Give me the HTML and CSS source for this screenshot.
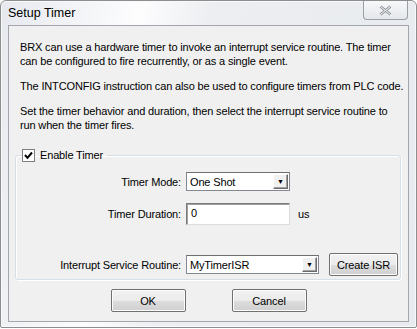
FILE: index.html
```html
<!DOCTYPE html>
<html>
<head>
  <meta charset="utf-8" />
  <title>Setup Timer</title>
  <link rel="stylesheet" href="styles.css">
</head>
<body>
  <section class="window">
    <header class="titlebar">
      <span class="title">Setup Timer</span>
      <span class="close">
        <svg width="13" height="11" viewBox="0 0 13 11">
          <path d="M1.5 1.5 L11.5 9.5 M11.5 1.5 L1.5 9.5" stroke="#8a8f96" stroke-width="2.6" fill="none"/>
          <path d="M1.5 1.5 L11.5 9.5 M11.5 1.5 L1.5 9.5" stroke="#fff" stroke-width="1" fill="none"/>
        </svg>
      </span>
    </header>
    <section class="client">
      <p>BRX can use a hardware timer to invoke an interrupt service routine. The timer can be configured to fire recurrently, or as a single event.</p>
      <p>The INTCONFIG instruction can also be used to configure timers from PLC code.</p>
      <p class="narrow">Set the timer behavior and duration, then select the interrupt service routine to run when the timer fires.</p>
      <fieldset class="group">
        <legend>
          <span class="check">
            <svg width="9" height="9" viewBox="0 0 9 9"><path d="M1 4 L3.5 6.8 L8 1.5" stroke="#000" stroke-width="2" fill="none"/></svg>
          </span>
          Enable Timer
        </legend>
        <div class="row mode">
          <label>Timer Mode:</label>
          <span class="combo short"><span class="value">One Shot</span><span class="drop">&#9660;</span></span>
        </div>
        <div class="row duration">
          <label>Timer Duration:</label>
          <span class="edit">0</span>
          <span class="unit">us</span>
        </div>
        <div class="row isr">
          <label>Interrupt Service Routine:</label>
          <span class="combo long"><span class="value">MyTimerISR</span><span class="drop">&#9660;</span></span>
          <button type="button" class="btn create">Create ISR</button>
        </div>
      </fieldset>
      <div class="actions">
        <button type="button" class="btn">OK</button>
        <button type="button" class="btn">Cancel</button>
      </div>
    </section>
  </section>
</body>
</html>
```

FILE: styles.css
```css
* { box-sizing: border-box; margin: 0; padding: 0; }
body {
  width: 417px;
  height: 329px;
  background: #fff;
  font: 11px "Liberation Sans", Arial, sans-serif;
  letter-spacing: -0.15px;
  color: #000;
}
.window {
  width: 417px;
  height: 328px;
  display: flex;
  flex-direction: column;
  border: 1px solid #8e8e8e;
  border-radius: 6px 6px 2px 2px;
  padding: 0 7px 5px;
  background: linear-gradient(100deg, #e6e9ee 0, #fdfdfe 30%, #eceef1 45%, #e8ebef 100%);
  box-shadow: inset 0 0 0 1px #f8f9fb;
}
.titlebar {
  height: 24px;
  display: flex;
  align-items: flex-start;
  justify-content: space-between;
}
.title {
  font-size: 12.5px;
  letter-spacing: 0;
  margin-top: 5px;
}
.close {
  width: 45px;
  height: 19px;
  display: flex;
  align-items: center;
  justify-content: center;
  border: 1px solid #9aa0a8;
  border-top: none;
  border-radius: 0 0 4px 4px;
  background: linear-gradient(#f7f8fa, #e4e7eb);
  margin-right: 1px;
}
.client {
  flex: 1;
  display: flex;
  flex-direction: column;
  background: #f0f0f0;
  border: 1px solid #a3a7ad;
  padding: 14px 0 0 11px;
}
.client p {
  max-width: 386px;
  line-height: 14px;
  margin-bottom: 11px;
}
.client p.narrow { max-width: 372px; }
.group {
  margin: 5px 0 0 -5px;
  width: 386px;
  height: 132px;
  border: 1px solid #d5dfe5;
  border-radius: 3px;
  box-shadow: inset 1px 1px 0 #fff, 1px 1px 0 #fff;
}
.group legend {
  margin-left: 6px;
  padding: 0 4px 0 0;
  display: flex;
  align-items: center;
  gap: 5px;
  line-height: 14px;
}
.check {
  width: 13px;
  height: 13px;
  background: #fff;
  border: 1px solid #7f7f7f;
  display: flex;
  align-items: center;
  justify-content: center;
}
.row {
  display: flex;
  align-items: center;
}
.row label {
  width: 170px;
  text-align: right;
  padding-right: 5px;
}
.mode { margin-top: 10px; }
.duration { margin-top: 12px; }
.isr { margin-top: 28px; }
.combo {
  height: 19px;
  display: flex;
  align-items: center;
  background: #fff;
  border: 1px solid #828790;
  border-top-color: #6f6f6f;
  padding-left: 3px;
}
.combo .value { flex: 1; }
.combo .drop {
  width: 15px;
  height: 15px;
  margin-right: 1px;
  background: #f0f0f0;
  border: 1px solid;
  border-color: #fff #6a6a6a #6a6a6a #fff;
  box-shadow: inset -1px -1px 0 #a0a0a0;
  font-size: 7px;
  display: flex;
  align-items: center;
  justify-content: center;
}
.short { width: 104px; }
.long { width: 133px; }
.edit {
  width: 104px;
  height: 22px;
  background: #fff;
  border: 1px solid;
  border-color: #7a7a7a #dcdcdc #dcdcdc #7a7a7a;
  box-shadow: inset 1px 1px 0 #a0a0a0;
  padding: 3px 0 0 4px;
}
.unit { margin-left: 8px; }
.btn {
  font: inherit;
  letter-spacing: inherit;
  color: #000;
  height: 23px;
  background: linear-gradient(#f2f2f2 0, #ebebeb 50%, #dddddd 51%, #cfcfcf 100%);
  border: 1px solid #707070;
  border-radius: 2px;
  box-shadow: inset 0 0 0 1px #fcfcfc;
}
.create {
  width: 69px;
  margin-left: 10px;
}
.actions {
  display: flex;
  justify-content: center;
  gap: 46px;
  margin: 9px 0 0 -11px;
}
.actions .btn { width: 75px; }
```
